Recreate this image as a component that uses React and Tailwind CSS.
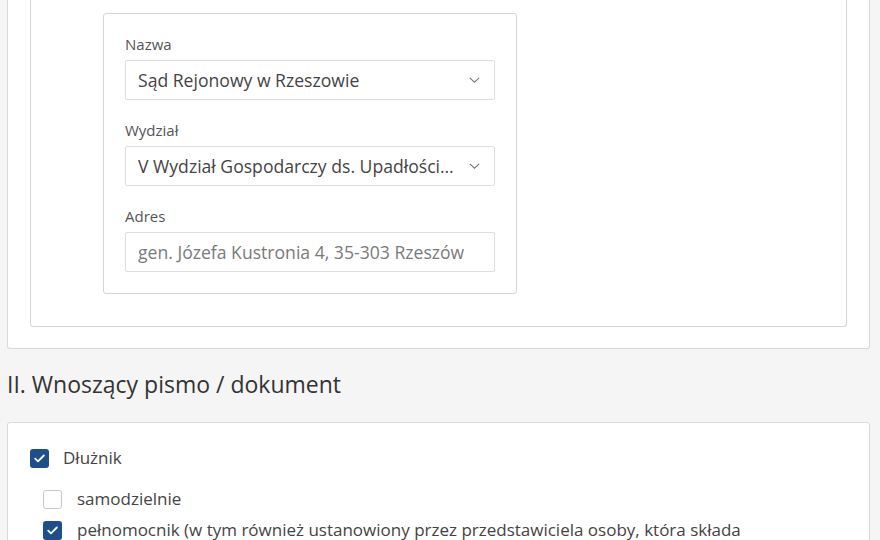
import React from 'react';

// Strzałka w polu wyboru
const Chevron = () => (
  <svg className="h-[6px] w-[11px] shrink-0 text-[#777]" viewBox="0 0 11 6" fill="none">
    <polyline points="0.8,0.8 5.5,5.2 10.2,0.8" stroke="currentColor" strokeWidth="1.1" />
  </svg>
);

const Check = () => (
  <svg className="w-[11px] h-[9px]" viewBox="0 0 11 9" fill="none">
    <polyline points="1.2,4.6 4,7.3 9.8,1.5" stroke="white" strokeWidth="1.8" strokeLinecap="round" strokeLinejoin="round" />
  </svg>
);

const Checkbox = ({ checked, className = '' }) =>
  checked ? (
    <span className={`flex h-[19px] w-[19px] shrink-0 items-center justify-center rounded-[3px] bg-[#1e4f8c] ${className}`}>
      <Check />
    </span>
  ) : (
    <span className={`h-[19px] w-[19px] shrink-0 rounded-[3px] border border-[#c8c8c8] bg-white ${className}`} />
  );

const Field = ({ label, value, select, muted, first }) => (
  <div className={first ? '' : 'mt-[20px]'}>
    <div className="h-[20px] text-[15px] leading-[20px] text-[#555]">{label}</div>
    <div className="mt-[6px] flex h-[40px] items-center justify-between gap-[12px] rounded-[2px] border border-[#dedede] bg-white pl-[12px] pr-[14px]">
      <span className={`truncate text-[17.6px] ${muted ? 'text-[#7a7a7a]' : 'text-[#444]'}`}>{value}</span>
      {select && <Chevron />}
    </div>
  </div>
);

export default function App() {
  return (
    <div
      className="h-[540px] w-[880px] overflow-hidden bg-[#f5f5f5]"
      style={{ fontFamily: '"Open Sans", "Noto Sans", sans-serif' }}
    >
      {/* I. Sąd */}
      <div className="ml-[7px] w-[863px] rounded-b-[3px] border-x border-b border-[#d9d9d9] bg-white px-[22px] pb-[21px]">
        <div className="rounded-b-[3px] border-x border-b border-[#d6d6d6] bg-white pl-[72px] pt-[13px] pb-[32px]">
          <div className="w-[414px] rounded-[3px] border border-[#d4d4d4] bg-white px-[21px] pt-[20px] pb-[21px]">
            <Field first label="Nazwa" value="Sąd Rejonowy w Rzeszowie" select />
            <Field label="Wydział" value="V Wydział Gospodarczy ds. Upadłościowych i Restrukturyzacyjnych" select />
            <Field label="Adres" value="gen. Józefa Kustronia 4, 35-303 Rzeszów" muted />
          </div>
        </div>
      </div>

      {/* II. Wnoszący */}
      <h2 className="ml-[7px] mt-[20px] h-[30px] text-[23px] leading-[30px] text-[#333]">II. Wnoszący pismo / dokument</h2>

      <div className="ml-[7px] mt-[23px] w-[863px] rounded-t-[3px] border border-[#d9d9d9] bg-white pl-[22px] pr-[80px] pt-[23px] pb-[20px]">
        <label className="flex h-[24px] items-center gap-[14px]">
          <Checkbox checked />
          <span className="text-[17px] leading-[24px] text-[#444]">Dłużnik</span>
        </label>
        <div className="mt-[17px] pl-[13px]">
          <label className="flex h-[24px] items-center gap-[15px]">
            <Checkbox />
            <span className="text-[17px] leading-[24px] text-[#444]">samodzielnie</span>
          </label>
          <label className="mt-[7px] flex items-start gap-[15px]">
            <Checkbox checked className="mt-[3px]" />
            <span className="text-[17px] leading-[24px] text-[#444]">
              pełnomocnik (w tym również ustanowiony przez przedstawiciela osoby, która składa wniosek)
            </span>
          </label>
        </div>
      </div>
    </div>
  );
}
